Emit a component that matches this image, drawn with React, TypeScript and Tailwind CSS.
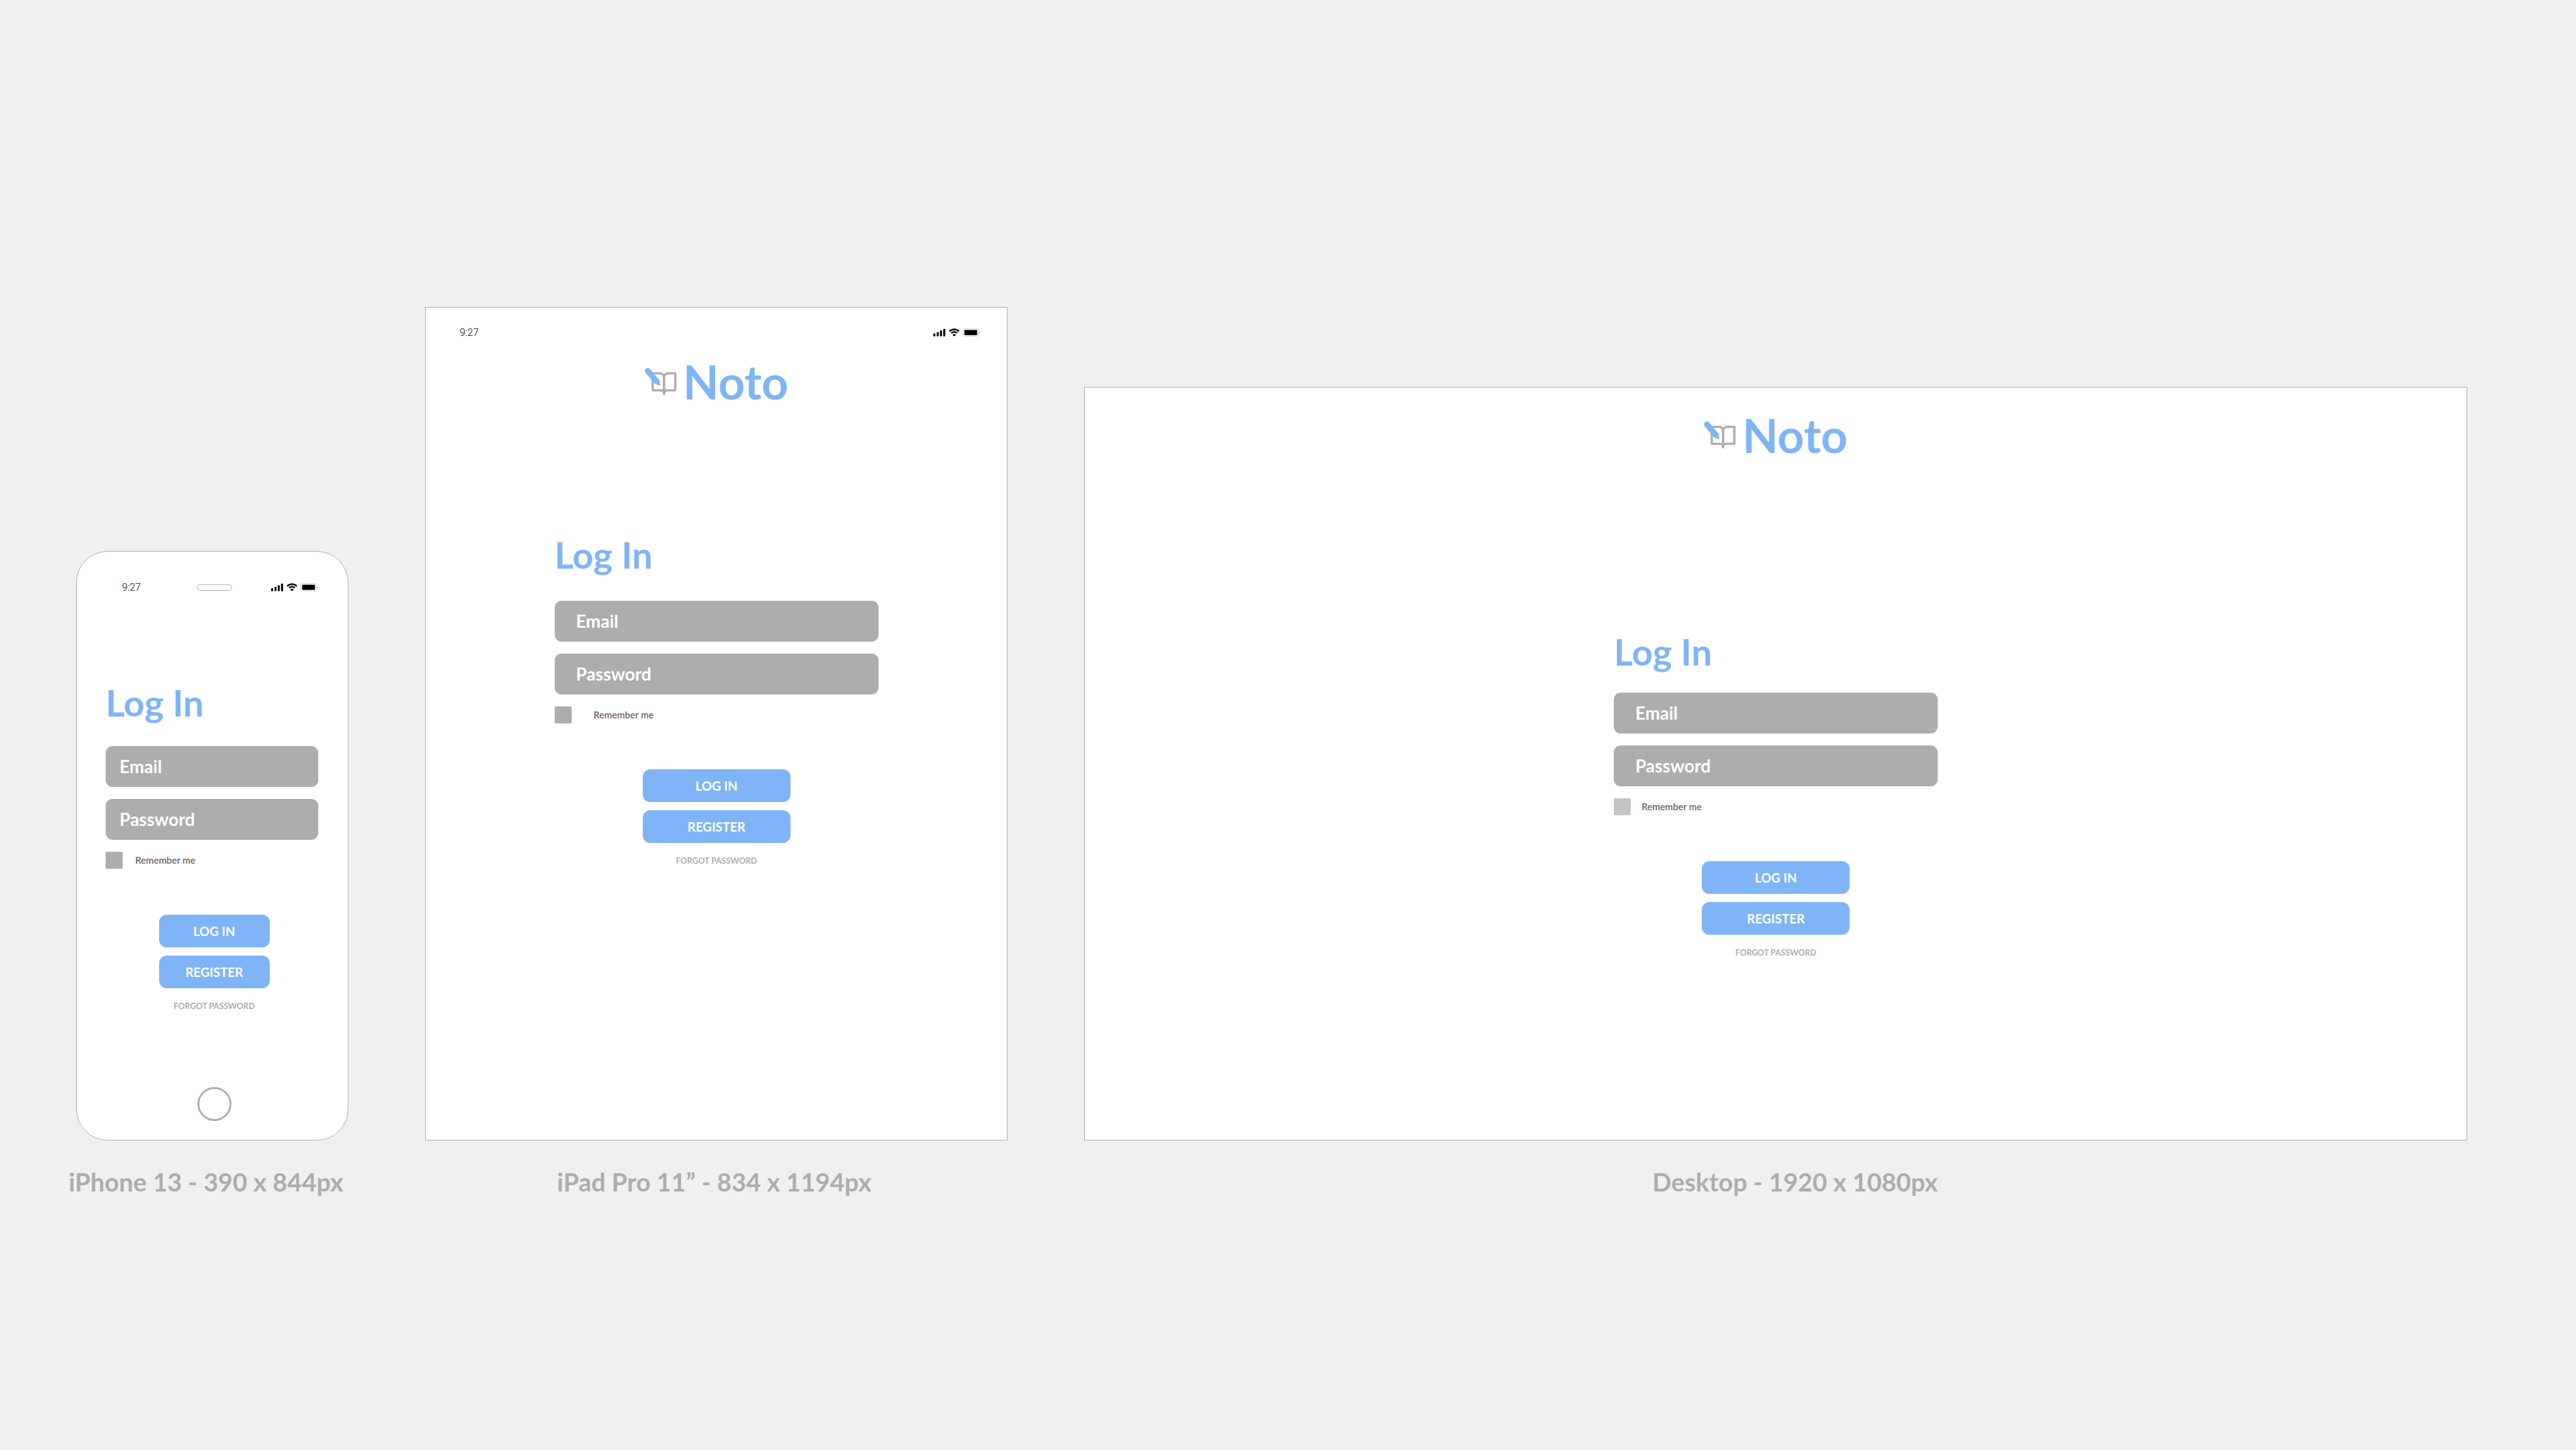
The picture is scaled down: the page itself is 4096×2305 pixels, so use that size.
import { useId } from "react";

function StatusIcons() {
  return (
    <svg viewBox="88 90 420 73" className="h-[13px] w-[75px]" aria-label="Signal, wifi and battery" role="img">
      <rect x="88" y="135" width="18" height="26" rx="5" />
      <rect x="118" y="123" width="18" height="38" rx="5" />
      <rect x="147" y="108" width="18" height="53" rx="5" />
      <rect x="176" y="94" width="19" height="67" rx="5" />
      <path d="M231 117Q274 79 317 117" fill="none" stroke="#000" strokeWidth="14" />
      <path d="M248 133Q274 109 300 133" fill="none" stroke="#000" strokeWidth="13" />
      <path d="M258 147Q274 133 290 147L274 162Z" />
      <rect x="354" y="92" width="135" height="69" rx="13" fill="none" stroke="#adadad" strokeWidth="4" />
      <rect x="365" y="104" width="114" height="47" rx="6" />
      <path d="M497 116Q518 127 497 138Z" fill="#adadad" />
    </svg>
  );
}

function Logo() {
  return (
    <div className="flex items-center justify-center gap-[10px]">
      <svg viewBox="72 122 286 244" className="h-[43px] w-[51px]" aria-hidden="true">
        <g fill="none" stroke="#adadad" strokeWidth="20" strokeLinecap="round" strokeLinejoin="round">
          <path d="M245 355C245 335 235 324 215 324H143V170H205C228 170 245 186 245 208Z" />
          <path d="M245 355C245 335 255 324 275 324H347V170H285C262 170 245 186 245 208Z" />
        </g>
        <path
          d="M79 165A26 26 0 0 1 119 131L204 233L211 272Q211 282 202 280L163 265Z"
          fill="#7fb5f6"
        />
      </svg>
      <h1 className="text-[74px] leading-[84px] font-bold text-[#7fb5f6]">Noto</h1>
    </div>
  );
}

type FormProps = {
  headingClass: string;
  fieldClass: string;
  rememberClass: string;
  checkboxClass: string;
  actionsClass: string;
  buttonClass: string;
};

function LoginForm({ headingClass, fieldClass, rememberClass, checkboxClass, actionsClass, buttonClass }: FormProps) {
  const id = useId();
  const field =
    "h-[65px] w-full rounded-[11px] bg-[#adadad] text-[28px] font-bold text-white placeholder:text-white placeholder:opacity-100 " +
    fieldClass;
  const button = "h-[52px] rounded-[12px] bg-[#7fb5f6] text-[20px] font-bold text-white " + buttonClass;
  return (
    <form onSubmit={(e) => e.preventDefault()}>
      <h2 className={"text-[58px] leading-[64px] font-bold text-[#7fb5f6] " + headingClass}>Log In</h2>
      <div className="flex flex-col gap-[19px]">
        <input type="email" aria-label="Email" placeholder="Email" className={field} />
        <input type="password" aria-label="Password" placeholder="Password" className={field} />
        <div className={"flex items-center " + rememberClass}>
          <input id={id} type="checkbox" className={"size-[27px] appearance-none rounded-[2px] " + checkboxClass} />
          <label htmlFor={id} className="text-[15px] leading-5 font-semibold text-[#6f6463]">
            Remember me
          </label>
        </div>
      </div>
      <div className={"mt-[73px] flex flex-col items-center " + actionsClass}>
        <button type="submit" className={button}>
          LOG IN
        </button>
        <button type="button" className={"mt-[13px] " + button}>
          REGISTER
        </button>
        <a href="#forgot" className="mt-[18px] text-[13px] leading-5 font-bold text-[#adadad]">
          FORGOT PASSWORD
        </a>
      </div>
    </form>
  );
}

const caption = "mt-[42px] flex justify-center text-[40px] leading-[48px] font-bold whitespace-nowrap text-[#adadad] ";
const time = "font-[Roboto] text-[16px] leading-5 font-light text-black ";

export default function App() {
  return (
    <main className="grid min-h-screen grid-cols-[433fr_926fr_2198fr] items-end gap-[122px] bg-[#f0f0f0] pr-[173px] pb-[402px] pl-[121px] font-[Lato,sans-serif]">
      <figure className="min-w-0">
        <div className="flex aspect-[433/937] w-full flex-col rounded-[50px] border border-[#adadad] bg-white">
          <div className="mt-[47px] grid h-5 grid-cols-[1fr_56px_1fr] items-center pl-[6px]">
            <span className={time + "pl-[66px]"}>9:27</span>
            <span className="h-[10px] rounded-full border border-[#adadad]" />
            <div className="flex justify-end pr-[47px]">
              <StatusIcons />
            </div>
          </div>
          <div className="mt-[141px] pr-[47px] pl-[46px]">
            <LoginForm
              headingClass="mb-[37px]"
              fieldClass="px-[22px]"
              rememberClass="gap-[20px]"
              checkboxClass="bg-[#adadad]"
              actionsClass="pl-[7px]"
              buttonClass="w-[176px]"
            />
          </div>
          <div className="mt-auto mb-[30px] flex justify-center pl-[6px]">
            <button type="button" aria-label="Home" className="size-[54px] rounded-full border-3 border-[#adadad]" />
          </div>
        </div>
        <figcaption className={caption + "pr-[20px]"}>iPhone 13 - 390 x 844px</figcaption>
      </figure>

      <figure className="min-w-0">
        <div className="flex aspect-[926/1325] w-full flex-col border border-[#adadad] bg-white">
          <div className="mt-[30px] mb-[26px] flex h-5 items-center justify-between pr-[42px] pl-[54px]">
            <span className={time}>9:27</span>
            <StatusIcons />
          </div>
          <Logo />
          <div className="mx-auto mt-[201px] w-[515px]">
            <LoginForm
              headingClass="mb-[41px]"
              fieldClass="px-[34px]"
              rememberClass="gap-[35px]"
              checkboxClass="bg-[#adadad]"
              actionsClass=""
              buttonClass="w-[235px]"
            />
          </div>
        </div>
        <figcaption className={caption + "pr-[7px]"}>iPad Pro 11” - 834 x 1194px</figcaption>
      </figure>

      <figure className="min-w-0">
        <div className="flex aspect-[2198/1198] w-full flex-col border border-[#adadad] bg-white pt-[34px]">
          <Logo />
          <div className="mx-auto mt-[270px] w-[515px]">
            <LoginForm
              headingClass="mb-[33px]"
              fieldClass="px-[34px]"
              rememberClass="gap-[17px]"
              checkboxClass="bg-[#c4c4c4]"
              actionsClass=""
              buttonClass="w-[235px]"
            />
          </div>
        </div>
        <figcaption className={caption + "pl-[61px]"}>Desktop - 1920 x 1080px</figcaption>
      </figure>
    </main>
  );
}
